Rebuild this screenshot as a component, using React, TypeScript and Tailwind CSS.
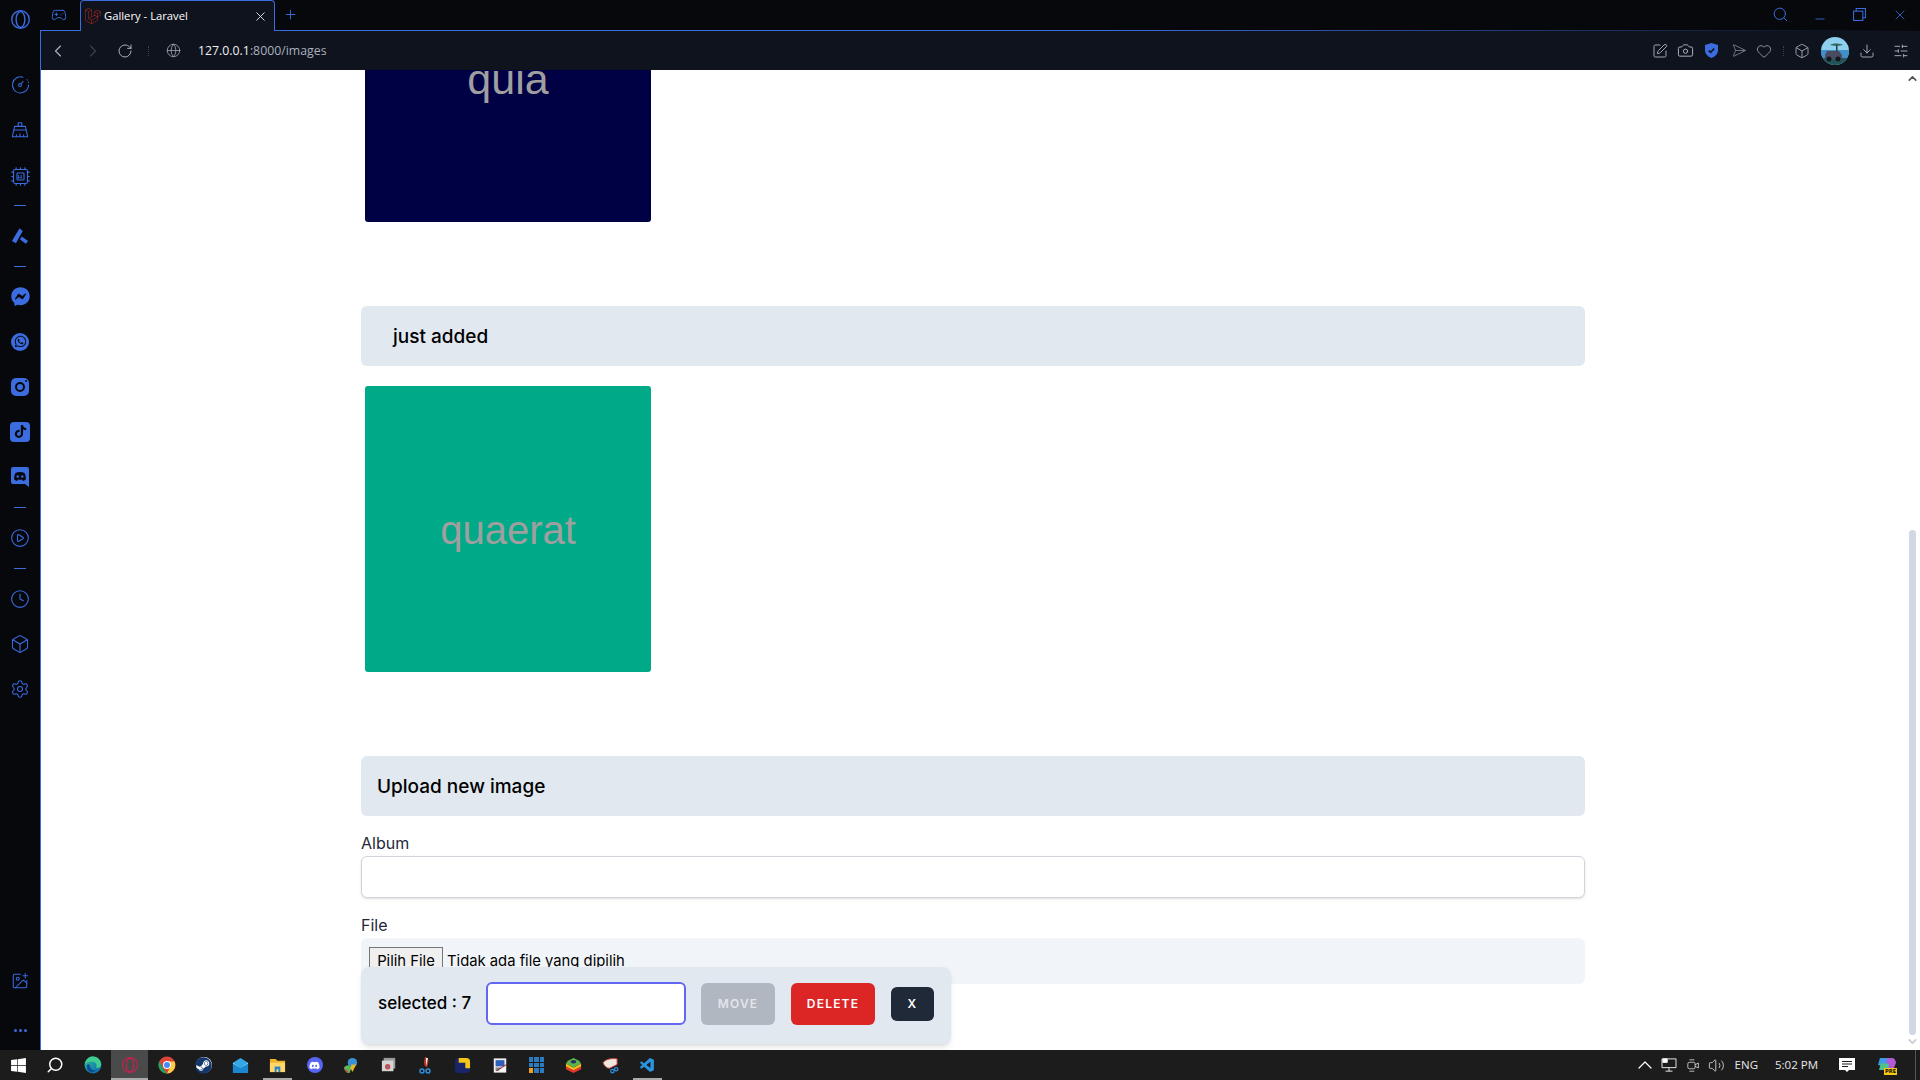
import {
  Box, Camera, ChevronLeft, ChevronRight, ChevronUp, ChevronDown, Cpu, Download, Gamepad2, Globe, Heart,
  ImagePlus, Minus, Plus, RotateCw, Search, Send, Settings, SlidersHorizontal, SquarePen, Volume2, X, Clock, CirclePlay,
} from "lucide-react"
import { FaDiscord, FaFacebookMessenger, FaLaravel, FaSteam, FaTiktok, FaWhatsapp, FaWindows } from "react-icons/fa"
import { VscVscode } from "react-icons/vsc"

const ui = "font-['Inter',sans-serif]"

export default function App() {
  return (
    <div className="w-screen h-screen flex flex-col overflow-hidden bg-[#07080c]">
      <div className="flex flex-1 min-h-0">
        <Sidebar />
        <div className="flex-1 min-w-0 flex flex-col">
          <TabStrip />
          <Toolbar />
          <Page />
        </div>
      </div>
      <Taskbar />
    </div>
  )
}

function SideItem({ children }: { children: React.ReactNode }) {
  return <div className="h-[45px] flex items-center justify-center text-[#3b6ce0]">{children}</div>
}

function SideDivider() {
  return (
    <div className="h-[16px] flex items-center justify-center">
      <div className="w-[12px] h-px bg-[#3b6ce0]" />
    </div>
  )
}

function OperaLogo({ className, color }: { className: string; color: string }) {
  return (
    <svg viewBox="0 0 24 24" className={className} fill="none" stroke={color} strokeWidth="1.6">
      <circle cx="12" cy="12" r="10" />
      <ellipse cx="12" cy="12" rx="5" ry="9" />
    </svg>
  )
}

function Sidebar() {
  return (
    <div className="w-[40px] shrink-0 flex flex-col">
      <div className="h-[38px] flex items-center justify-center">
        <OperaLogo className="w-[21px] h-[21px]" color="#3b6ce0" />
      </div>
      <div className="mt-[24px]">
        <SideItem>
          <svg viewBox="0 0 20 20" className="w-[19px] h-[19px]" fill="none" stroke="currentColor" strokeWidth="1.100">
            <path d="M13 2.500A8.500 8.500 0 1 0 18.500 10" />
            <path d="M18.300 7.500l.1.400M17 5l.2.300" strokeLinecap="round" />
            <circle cx="9.500" cy="10.500" r="1.500" />
            <path d="M10.500 9.500 13 6.500" />
          </svg>
        </SideItem>
        <SideItem>
          <svg viewBox="0 0 20 20" className="w-[18px] h-[18px]" fill="none" stroke="currentColor" strokeWidth="1.200" strokeLinejoin="round">
            <path d="M8 6V2h4v4" />
            <path d="M4 6h12l2.500 11.500H1.500Z" />
            <path d="M3 10h13.500M6 17.500V15M10 17.500V14M14 17.500V15" />
          </svg>
        </SideItem>
        <SideItem>
          <div className="relative flex items-center justify-center translate-y-[2px]">
            <Cpu size={21} strokeWidth={1.3} />
            <span className="absolute text-[6px] leading-none font-bold font-['Liberation_Sans',sans-serif]">H</span>
          </div>
        </SideItem>
        <SideDivider />
        <SideItem>
          <svg viewBox="0 0 20 20" className="w-[18px] h-[18px]" fill="#3b6ce0">
            <path d="M9.500 1.500 13 4.500 5.500 18 1 15.500Z" />
            <path d="M12 10.500 19 15.500 16.500 18.500 10 14Z" />
          </svg>
        </SideItem>
        <SideDivider />
        <SideItem><FaFacebookMessenger size={19} /></SideItem>
        <SideItem>
          <div className="w-[18px] h-[18px] rounded-full bg-[#3b6ce0] flex items-center justify-center text-[#07080c]">
            <FaWhatsapp size={13} />
          </div>
        </SideItem>
        <SideItem>
          <div className="relative w-[18px] h-[18px] rounded-[5px] bg-[#3b6ce0] flex items-center justify-center">
            <div className="w-[10px] h-[10px] rounded-full border-2 border-[#07080c]" />
            <div className="absolute top-[2px] right-[2px] w-[2px] h-[2px] rounded-full bg-[#07080c]" />
          </div>
        </SideItem>
        <SideItem>
          <div className="w-[20px] h-[20px] rounded-[4px] bg-[#3b6ce0] flex items-center justify-center text-[#07080c]">
            <FaTiktok size={13} />
          </div>
        </SideItem>
        <SideItem>
          <svg viewBox="0 0 18 20" className="w-[18px] h-[20px]">
            <path d="M2 0h14a2 2 0 0 1 2 2v18l-4-3H2a2 2 0 0 1-2-2V2a2 2 0 0 1 2-2Z" fill="#3b6ce0" />
            <path d="M4.500 6c2.500-1.500 6.500-1.500 9 0 1 2 1.500 4 1.300 6.500-1 .8-2 1.200-3 1.400l-.8-1.300c-1.300.3-2.700.3-4 0l-.8 1.300c-1-.2-2-.6-3-1.400C3 10 3.500 8 4.500 6Z" fill="#07080c" />
            <circle cx="6.700" cy="9.500" r="1.200" fill="#3b6ce0" />
            <circle cx="11.300" cy="9.500" r="1.200" fill="#3b6ce0" />
          </svg>
        </SideItem>
        <SideDivider />
        <SideItem><CirclePlay size={20} strokeWidth={1.3} /></SideItem>
        <SideDivider />
        <SideItem><Clock size={20} strokeWidth={1.3} /></SideItem>
        <SideItem><Box size={20} strokeWidth={1.3} /></SideItem>
        <SideItem><Settings size={20} strokeWidth={1.3} /></SideItem>
      </div>
      <div className="mt-auto mb-[15px]">
        <SideItem><ImagePlus size={18} strokeWidth={1.4} /></SideItem>
      </div>
      <div className="h-[24px] mb-[8px] flex items-center justify-center gap-[2px]">
        <div className="w-[3px] h-[3px] rounded-full bg-[#3b6ce0]" />
        <div className="w-[3px] h-[3px] rounded-full bg-[#3b6ce0]" />
        <div className="w-[3px] h-[3px] rounded-full bg-[#3b6ce0]" />
      </div>
    </div>
  )
}

function TabStrip() {
  return (
    <div className="h-[31px] shrink-0 flex items-stretch">
      <div className="w-[40px] border-b border-[#3b6ce0] flex items-center justify-center pb-px pr-[2px]">
        <Gamepad2 size={16} strokeWidth={1.5} className="text-[#3b6ce0]" />
      </div>
      <div className="w-[195px] bg-[#0f131d] border border-b-0 border-[#3b6ce0] rounded-t-[4px] flex items-center pl-[4px] pr-[6px]">
        <FaLaravel size={16} className="text-[#b5281f]" />
        <span className="ml-[3px] text-[11.250px] text-white font-['Open_Sans',sans-serif]">Gallery - Laravel</span>
        <X size={15} strokeWidth={1.5} className="ml-auto text-[#dfe2e8]" />
      </div>
      <div className="relative flex-1 flex items-center pb-[2px]">
        <Plus size={15} strokeWidth={1.5} className="ml-[8px] text-[#3b6ce0]" />
        <div className="absolute left-0 right-0 bottom-0 h-px bg-linear-to-r from-[#3b6ce0] via-[#3b6ce0] to-transparent" />
        <div className="ml-auto flex items-center text-[#3b6ce0]">
          <Search size={17} strokeWidth={1.4} />
          <Minus size={14} strokeWidth={1.5} className="ml-[24px] mt-[9px]" />
          <svg viewBox="0 0 14 14" className="ml-[26px] w-[13px] h-[13px]" fill="none" stroke="currentColor" strokeWidth="1.100">
            <rect x="0.600" y="3.400" width="10" height="10" />
            <path d="M3.400 3.400V.6h10v10h-2.800" />
          </svg>
          <X size={16} strokeWidth={1.2} className="ml-[26px] mr-[12px]" />
        </div>
      </div>
    </div>
  )
}

function Toolbar() {
  return (
    <div className="h-[39px] shrink-0 bg-[#0f131d] border-l border-[#3b6ce0] flex items-center text-[#aab1bf]">
      <ChevronLeft size={20} strokeWidth={1.4} className="ml-[7px]" />
      <ChevronRight size={20} strokeWidth={1.4} className="ml-[15px] text-[#3a404d]" />
      <RotateCw size={16} strokeWidth={1.5} className="ml-[14px]" />
      <div className="ml-[15px] w-px h-[10px] border-l border-dotted border-[#3a404d]" />
      <Globe size={15} strokeWidth={1.2} className="ml-[17px]" />
      <span className="ml-[17px] mt-px text-[12.300px] font-['Open_Sans',sans-serif]">
        <span className="text-[#f0f2f5]">127.0.0.1</span>:8000/images
      </span>
      <div className="ml-auto flex items-center">
        <SquarePen size={16} strokeWidth={1.4} />
        <Camera size={17} strokeWidth={1.4} className="ml-[9px]" />
        <svg viewBox="0 0 14 16" className="ml-[11px] w-[13px] h-[15px]">
          <path d="M7 0 14 2V8C14 12 10 15 7 16 4 15 0 12 0 8V2Z" fill="#3b6ce0" />
          <path d="M4 8l2 2 4-4" fill="none" stroke="#0f131d" strokeWidth="1.600" />
        </svg>
        <Send size={15} strokeWidth={1.3} className="ml-[11px] rotate-45 text-[#7b8291]" />
        <Heart size={16} strokeWidth={1.3} className="ml-[12px] text-[#9aa1ae]" />
        <div className="ml-[11px] w-px h-[10px] border-l border-dotted border-[#3a404d]" />
        <Box size={16} strokeWidth={1.3} className="ml-[10px]" />
        <svg viewBox="0 0 28 28" className="ml-[11px] w-[28px] h-[28px] rounded-full">
          <rect width="28" height="28" fill="#8fd0ee" />
          <rect y="13" width="28" height="8" fill="#3f8fc9" />
          <rect y="21" width="28" height="7" fill="#23545a" />
          <path d="M9 8c3-2 9-2 13 0-3 1-10 1-13 0Z" fill="#2f6a5e" />
          <path d="M15 8h1.500v9H15Z" fill="#2a3f3c" />
          <path d="M6 14h12l3 4v4H4v-4Z" fill="#4a4a60" />
          <circle cx="8" cy="22" r="2.500" fill="#15151c" />
          <circle cx="17" cy="22" r="2.500" fill="#15151c" />
        </svg>
        <Download size={16} strokeWidth={1.4} className="ml-[10px]" />
        <SlidersHorizontal size={16} strokeWidth={1.4} className="ml-[18px] mr-[11px]" />
      </div>
    </div>
  )
}

function Thumb({ color, label, size }: { color: string; label: string; size: string }) {
  return (
    <div className={`w-[286px] h-[286px] ml-[4px] rounded-[3px] flex items-center justify-center ${color}`}>
      <span className={`pt-[1px] text-[#a09f9f] font-['Liberation_Sans',sans-serif] ${size}`}>{label}</span>
    </div>
  )
}

function Page() {
  return (
    <div className={`relative flex-1 min-h-0 flex bg-white border-l border-[#3b6ce0] overflow-hidden ${ui}`}>
      <div className="flex-1 min-w-0 pl-[320px]">
        <div className="w-[1224px] -mt-[134px]">
          <Thumb color="bg-[#000045]" label="quia" size="text-[43px]" />
          <div className="mt-[84px] h-[60px] rounded-md bg-[#e2e8f0] flex items-center px-[32px] pt-[2px] text-[19px] font-medium text-black">
            just added
          </div>
          <div className="mt-[20px]">
            <Thumb color="bg-[#00aa88]" label="quaerat" size="text-[40px]" />
          </div>
          <div className="mt-[84px] h-[60px] rounded-md bg-[#e2e8f0] flex items-center px-[16px] pt-[2px] text-[19px] font-medium text-black">
            Upload new image
          </div>
          <div className="mt-[15px] h-[24px] text-[16px] text-[#1f2937]">Album</div>
          <div className="mt-[1px] h-[42px] rounded-md border border-[#d1d5db] bg-white shadow-sm" />
          <div className="mt-[15px] h-[24px] text-[16px] text-[#1f2937]">File</div>
          <div className="mt-[1px] h-[46px] rounded-md bg-[#f1f5f9] flex items-start pt-[9px] pl-[8px] text-[14.800px] text-black">
            <button className="h-[28px] w-[74px] border border-[#767676] bg-[#efefef]">Pilih File</button>
            <span className="ml-[4px] leading-[28px]">Tidak ada file yang dipilih</span>
          </div>
        </div>
      </div>
      <div className="w-[15px] shrink-0 flex flex-col items-center py-[2px]">
        <ChevronUp size={13} strokeWidth={3} className="text-[#555]" />
        <div className="mt-[445px] w-[7px] flex-1 rounded-sm bg-[#cfd8e3]" />
        <ChevronDown size={13} strokeWidth={3} className="text-[#c6ccd4]" />
      </div>
      {/* selection bar */}
      <div className="absolute left-[320px] bottom-[6px] w-[590px] h-[77px] rounded-lg bg-[#e2e8f0] shadow-md flex items-center pl-[17px] pb-[4px]">
        <span className="w-[93px] shrink-0 whitespace-nowrap text-[17px] font-medium text-black">selected : 7</span>
        <div className="ml-[15px] w-[200px] h-[43px] shrink-0 rounded-md border-2 border-[#6366f1] bg-white" />
        <button className="ml-[15px] w-[74px] h-[42px] shrink-0 rounded-md bg-[#b1b7c1] text-[#e2e5ea] text-[12px] font-semibold tracking-widest">MOVE</button>
        <button className="ml-[16px] w-[84px] h-[42px] shrink-0 rounded-md bg-[#dc2626] text-white text-[12px] font-semibold tracking-widest">DELETE</button>
        <button className="ml-[16px] w-[43px] h-[34px] shrink-0 rounded-md bg-[#1f2937] text-white text-[12px] font-semibold tracking-widest">X</button>
      </div>
    </div>
  )
}

function Slot({ children, active, running }: { children: React.ReactNode; active?: boolean; running?: boolean }) {
  return (
    <div className={`relative w-[37px] h-full flex items-center justify-center ${active ? "bg-[#4a4a4a]" : ""}`}>
      {children}
      {running && <div className={`absolute bottom-0 h-[2px] bg-[#aaaaaa] ${active ? "inset-x-0" : "inset-x-[4px]"}`} />}
    </div>
  )
}

function Taskbar() {
  return (
    <div className="h-[30px] shrink-0 bg-[#1c1c1c] flex items-center font-['Open_Sans',sans-serif]">
      <div className="flex h-full">
        <Slot><FaWindows size={17} className="text-white" /></Slot>
        <Slot><Search size={18} strokeWidth={2} className="text-white scale-x-[-1] -translate-x-[1px]" /></Slot>
        <Slot>
          <svg viewBox="0 0 18 18" className="w-[18px] h-[18px]">
            <defs>
              <linearGradient id="edge" x1="0" y1="0" x2="1" y2="1">
                <stop offset="0" stopColor="#2fc4a0" />
                <stop offset="1" stopColor="#0c5fae" />
              </linearGradient>
            </defs>
            <circle cx="9" cy="9" r="8.500" fill="url(#edge)" />
            <path d="M1 8C2 3 5 .5 9 .5c5 0 8 4 8 8 0 3-3 4-5 3 2-3-1-6-4-6-3 0-6 1-7 2.500Z" fill="#3fce8f" />
            <path d="M6 10c0 3 3 5 6 4-1 2-4 3-6 2-2-1-4-4-3-7 1-1 2-1 3 1Z" fill="#0a4f95" />
          </svg>
        </Slot>
        <Slot active running><OperaLogo className="w-[18px] h-[18px]" color="#c2234f" /></Slot>
        <Slot>
          <svg viewBox="0 0 18 18" className="w-[18px] h-[18px]">
            <circle cx="9" cy="9" r="8.500" fill="#dd4437" />
            <path d="M1.500 5 5 12l4 5.500a8.500 8.500 0 0 1-7.500-12.500Z" fill="#1ea362" />
            <path d="M9 5.500h7.500A8.500 8.500 0 0 1 9 17.500l3.500-7Z" fill="#ffcd40" />
            <circle cx="9" cy="9" r="4" fill="#fff" />
            <circle cx="9" cy="9" r="3" fill="#4a8af4" />
          </svg>
        </Slot>
        <Slot>
          <div className="w-[16px] h-[16px] rounded-full bg-white flex items-center justify-center">
            <FaSteam size={17} className="text-[#14386b] shrink-0" />
          </div>
        </Slot>
        <Slot>
          <svg viewBox="0 0 18 18" className="w-[17px] h-[17px]">
            <path d="M1 6 9 1l8 5v11H1Z" fill="#35a6e6" />
            <path d="M1 6l8 6 8-6v1l-8 5-8-5Z" fill="#d9f0fb" />
            <path d="M1 7l8 5 8-5v10H1Z" fill="#1b87cf" />
          </svg>
        </Slot>
        <Slot running>
          <svg viewBox="0 0 18 18" className="w-[17px] h-[17px]">
            <path d="M1 2h6l2 2h8v12H1Z" fill="#f0b429" />
            <path d="M1 6h16v10H1Z" fill="#ffd768" />
            <path d="M6 10h6v6h-2v-3H8v3H6Z" fill="#2a84d0" />
          </svg>
        </Slot>
        <Slot>
          <div className="w-[16px] h-[16px] rounded-full bg-[#5865f2] flex items-center justify-center text-white">
            <FaDiscord size={11} />
          </div>
        </Slot>
        <Slot>
          <svg viewBox="0 0 18 18" className="w-[17px] h-[17px]">
            <circle cx="10" cy="6" r="5" fill="#3a8fd6" />
            <path d="M1 11c3-3 6-3 8 0l-2 6c-3 0-6-3-6-6Z" fill="#5cb85c" />
            <path d="M9 8h5l-4 8-2-4Z" fill="#e8b820" />
            <path d="M1 11l5 5-2 1Z" fill="#d9433a" />
          </svg>
        </Slot>
        <Slot>
          <svg viewBox="0 0 18 18" className="w-[16px] h-[16px]">
            <rect x="3" y="1" width="13" height="12" fill="#9a9a9a" />
            <rect x="1" y="4" width="13" height="12" fill="#d5d5d5" />
            <circle cx="7.500" cy="11" r="3" fill="#d9433a" />
            <circle cx="7.500" cy="11" r="1.300" fill="#3a8fd6" />
          </svg>
        </Slot>
        <Slot>
          <svg viewBox="0 0 18 18" className="w-[18px] h-[18px]">
            <path d="M8 1c3 0 4 3 3 7l-1 3c-2 0-3-2-3-5Z" fill="#c0392b" />
            <path d="M9 2h2L9 10Z" fill="#eee" />
            <circle cx="5" cy="15" r="2" fill="none" stroke="#2d8fdd" strokeWidth="1.400" />
            <circle cx="11" cy="15" r="2" fill="none" stroke="#2d8fdd" strokeWidth="1.400" />
          </svg>
        </Slot>
        <Slot>
          <svg viewBox="0 0 18 18" className="w-[17px] h-[17px]">
            <rect x="1" y="1" width="16" height="16" rx="4" fill="#19246b" />
            <path d="M5 1h8a4 4 0 0 1 4 4v7h-5V6H5Z" fill="#f5c518" />
          </svg>
        </Slot>
        <Slot>
          <svg viewBox="0 0 18 18" className="w-[16px] h-[17px]">
            <rect x="2" y="1" width="14" height="16" fill="#f2f2f2" />
            <rect x="4" y="3" width="10" height="7" fill="#2b5fb8" />
            <path d="M5 15 16 8" stroke="#b02a2a" strokeWidth="1.200" />
            <path d="M4 12h6M4 14h4" stroke="#333" />
          </svg>
        </Slot>
        <Slot>
          <div className="grid grid-cols-3 gap-px w-[16px] h-[16px]">
            <div className="bg-[#2b7bc0]" /><div className="bg-[#2b7bc0]" /><div className="bg-[#2b7bc0]" />
            <div className="bg-[#2b7bc0]" /><div className="bg-[#2b7bc0]" /><div className="bg-[#2b7bc0]" />
            <div className="bg-[#f0a020]" /><div className="bg-[#2b7bc0]" /><div className="bg-[#2b7bc0]" />
          </div>
        </Slot>
        <Slot>
          <svg viewBox="0 0 18 18" className="w-[17px] h-[17px]">
            <path d="M1 10l8 4 8-4v3l-8 4-8-4Z" fill="#e8352e" />
            <path d="M1 7l8 4 8-4v3l-8 4-8-4Z" fill="#f5b81e" />
            <path d="M3 4l6-3 6 3 2 3-8 4-8-4Z" fill="#5ab54a" />
            <ellipse cx="9" cy="5" rx="3" ry="1.800" fill="#2b2f6b" />
          </svg>
        </Slot>
        <Slot>
          <svg viewBox="0 0 18 18" className="w-[17px] h-[17px]">
            <path d="M1 6c3-4 10-5 15-4v6L8 12C5 12 2 9 1 6Z" fill="#efe6e0" stroke="#c0392b" />
            <circle cx="11" cy="15" r="1.800" fill="none" stroke="#2d8fdd" strokeWidth="1.300" />
            <circle cx="15" cy="13" r="1.800" fill="none" stroke="#2d8fdd" strokeWidth="1.300" />
          </svg>
        </Slot>
        <Slot running><VscVscode size={17} className="text-[#2a94e0]" /></Slot>
      </div>
      <div className="ml-auto flex items-center h-full text-white">
        <ChevronUp size={24} strokeWidth={1.2} />
        <svg viewBox="0 0 18 16" className="ml-[4px] w-[16px] h-[14px]" fill="none" stroke="white">
          <path d="M1 1h16v10H1ZM9 11v4M5 15h8" />
          <path d="M2 1h5v4H2Z" fill="white" />
        </svg>
        <svg viewBox="0 0 16 16" className="ml-[10px] w-[13px] h-[15px]" fill="none" stroke="#ddd">
          <rect x="1" y="4" width="9" height="8" rx="2" />
          <path d="M10 7l4-2v6l-4-2M3 1h6M3 15h6" />
        </svg>
        <Volume2 size={17} strokeWidth={1.2} className="ml-[8px] text-[#ddd]" />
        <span className="ml-[10px] text-[11.500px] text-[#e8e8e8]">ENG</span>
        <span className="ml-[17px] text-[11.500px] text-[#e8e8e8]">5:02 PM</span>
        <svg viewBox="0 0 16 16" className="ml-[21px] w-[16px] h-[16px]">
          <path d="M0 1h16v12H10l-2 2-2-2H0Z" fill="white" />
          <path d="M3 4.500h10M3 7h10M3 9.500h6" stroke="#1c1c1c" />
        </svg>
        <div className="relative ml-[22px] w-[20px] h-[18px]">
          <svg viewBox="0 0 20 18" className="w-[20px] h-[18px]">
            <path d="M3 2h7l2 8H5L1 9Z" fill="#3f9be8" />
            <path d="M10 2h5c2 0 4 2 4 5l-3 7H9Z" fill="#b45ad8" />
            <path d="M4 7l8 1-1 6H2Z" fill="#4cc38a" />
          </svg>
          <span className="absolute -bottom-[1px] right-0 px-[1px] bg-[#f6c915] text-[6px] leading-[7px] font-bold text-black">PRE</span>
        </div>
        <div className="ml-[18px] mr-[4px] w-px h-full bg-[#555555]" />
      </div>
    </div>
  )
}
